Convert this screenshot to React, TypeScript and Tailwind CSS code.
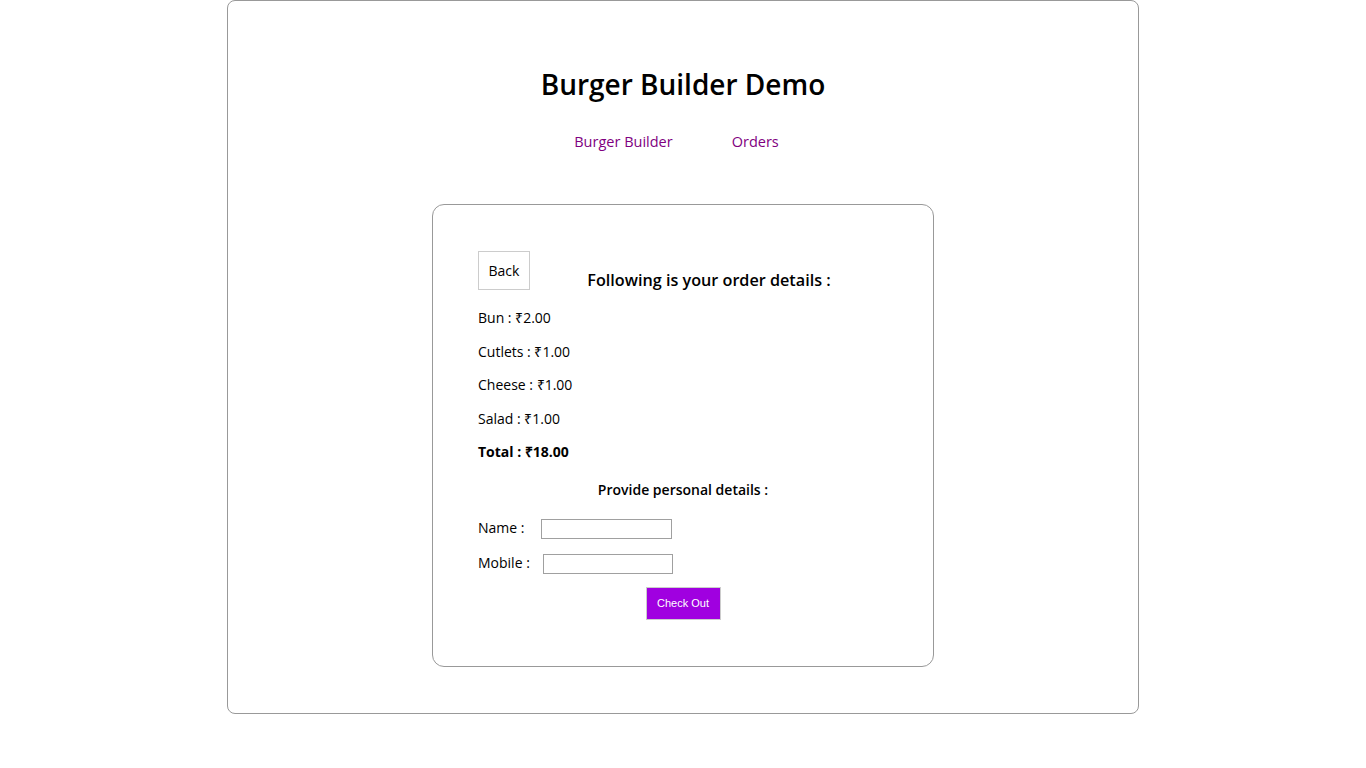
export default function App() {
  const items = [
    { name: "Bun", price: "₹2.00" },
    { name: "Cutlets", price: "₹1.00" },
    { name: "Cheese", price: "₹1.00" },
    { name: "Salad", price: "₹1.00" },
  ];

  return (
    <div className="min-h-screen bg-white font-['Open_Sans',sans-serif] text-black">
      <div className="mx-auto flex w-[912px] flex-col items-center rounded-lg border border-[#999] pt-[63px] pb-[46px]">
        <h1 className="text-[28px] leading-[40px] font-semibold">Burger Builder Demo</h1>

        <nav className="mt-[28px] flex gap-[59px] pr-[13px] text-[14.5px] leading-[20px] text-[#800080]">
          <a href="#">Burger Builder</a>
          <a href="#">Orders</a>
        </nav>

        <div className="mt-[52px] w-[502px] rounded-xl border border-[#999] px-[45px] pt-[46px] pb-[46px] text-[14px]">
          <div className="flex items-start">
            <button className="h-[39px] w-[52px] border border-[#ccc] bg-white text-[14px]">
              Back
            </button>
            <h3 className="mt-[17px] flex-1 text-center text-[16.2px] leading-[24px] font-semibold">
              Following is your order details :
            </h3>
          </div>

          <div className="mt-[9px]">
            {items.map((item) => (
              <p key={item.name} className="h-[33.5px] leading-[33.5px]">
                {item.name} : {item.price}
              </p>
            ))}
            <p className="h-[33.5px] leading-[33.5px] font-bold">Total : ₹18.00</p>
          </div>

          <p className="h-[42px] text-center leading-[42px] font-semibold">Provide personal details :</p>

          <div className="mt-[1px] flex h-[35px] items-center">
            <label className="-mt-[3px]">Name :</label>
            <input className="ml-[17px] h-[20px] w-[131px] border border-[#a0a0a0]" />
          </div>
          <div className="flex h-[35px] items-center">
            <label className="-mt-[3px]">Mobile :</label>
            <input className="ml-[13px] h-[20px] w-[130px] border border-[#a0a0a0]" />
          </div>

          <div className="mt-[5px] flex justify-center">
            <button className="h-[33px] w-[75px] border border-[#ccc] bg-[#a000e0] font-['Liberation_Sans',sans-serif] text-[11px] text-white">
              Check Out
            </button>
          </div>
        </div>
      </div>
    </div>
  );
}
